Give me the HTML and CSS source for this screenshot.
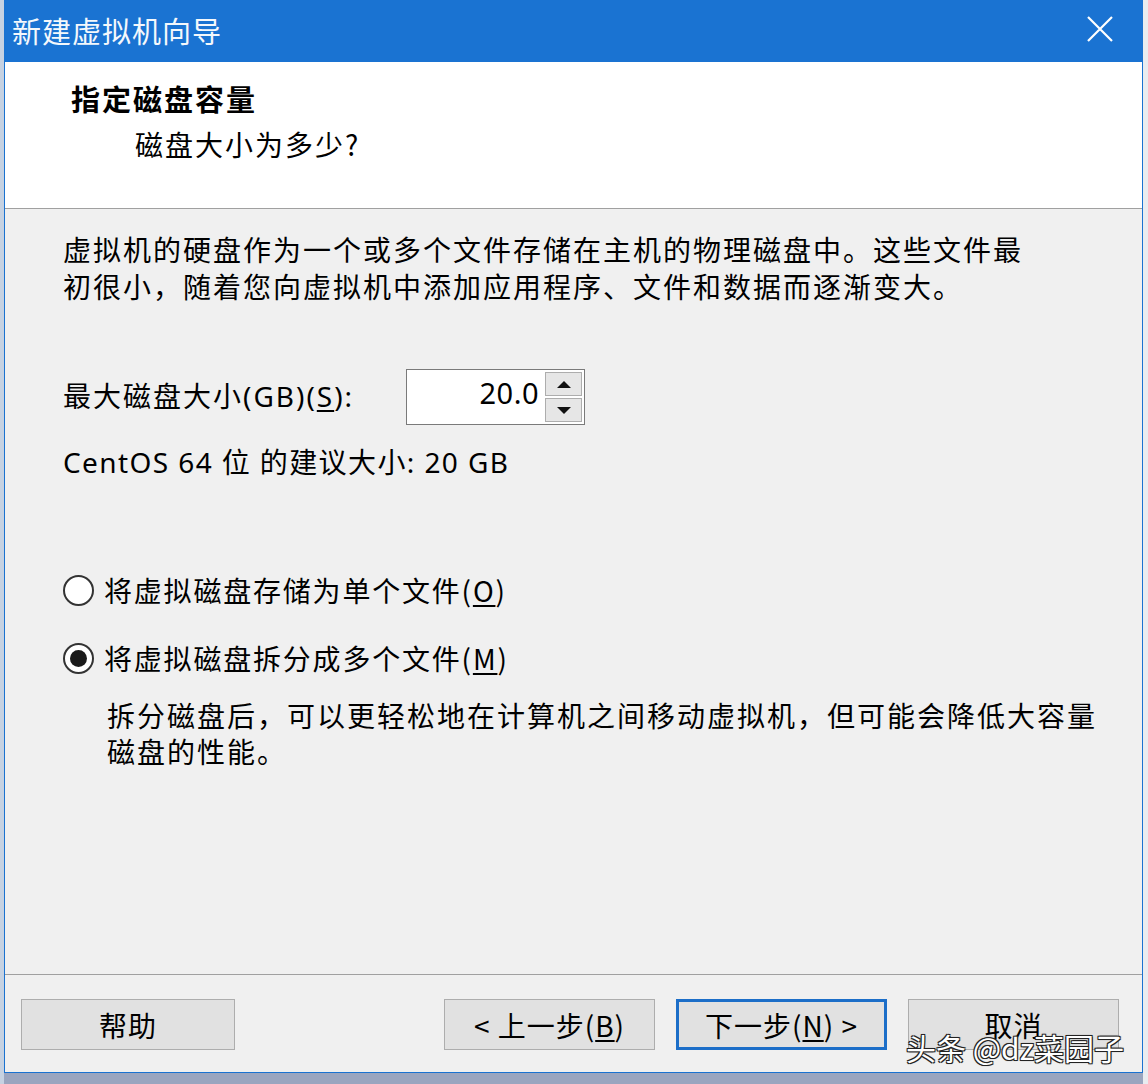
FILE: index.html
```html
<!DOCTYPE html>
<html lang="zh-CN">
<head>
<meta charset="utf-8">
<title>新建虚拟机向导</title>
<link rel="stylesheet" href="styles.css">
</head>
<body>
<div class="screen">
  <div class="dialog">
    <div class="titlebar">
      <span class="title">新建虚拟机向导</span>
      <svg class="close" width="28" height="28" viewBox="0 0 28 28"><path d="M2 2 L26 26 M26 2 L2 26" stroke="#ffffff" stroke-width="2.2" fill="none"/></svg>
    </div>
    <div class="header">
      <div class="h-title">指定磁盘容量</div>
      <div class="h-sub">磁盘大小为多少?</div>
    </div>
    <div class="content">
      <p class="para">虚拟机的硬盘作为一个或多个文件存储在主机的物理磁盘中。这些文件最<br>初很小，随着您向虚拟机中添加应用程序、文件和数据而逐渐变大。</p>
      <div class="size-row">
        <span class="label">最大磁盘大小(GB)(<u>S</u>):</span>
        <div class="spin">
          <div class="spin-input">20.0</div>
          <div class="spin-btns">
            <div class="spin-btn"><span class="tri-up"></span></div>
            <div class="spin-btn"><span class="tri-down"></span></div>
          </div>
        </div>
      </div>
      <div class="recommend">CentOS 64 位 的建议大小: 20 GB</div>
      <div class="radio-row first">
        <span class="radio"></span>
        <span class="radio-text">将虚拟磁盘存储为单个文件(<u>O</u>)</span>
      </div>
      <div class="radio-row second">
        <span class="radio checked"><span class="dot"></span></span>
        <span class="radio-text">将虚拟磁盘拆分成多个文件(<u>M</u>)</span>
      </div>
      <div class="desc">
        <div class="desc-line">拆分磁盘后，可以更轻松地在计算机之间移动虚拟机，但可能会降低大容量</div>
        <div class="desc-line">磁盘的性能。</div>
      </div>
    </div>
    <div class="footer">
      <button class="btn help">帮助</button>
      <div class="spacer"></div>
      <button class="btn back">&lt; 上一步(<u>B</u>)</button>
      <button class="btn next">下一步(<u>N</u>) &gt;</button>
      <button class="btn cancel">取消</button>
    </div>
    <div class="watermark">头条 @dz菜园子</div>
  </div>
</div>
</body>
</html>
```

FILE: styles.css
```css
* { box-sizing: border-box; }
html, body {
  margin: 0;
  padding: 0;
  width: 1148px;
  height: 1084px;
  overflow: hidden;
}
body {
  background: #9aa5bf;
  font-family: "Noto Sans", "Noto Sans CJK SC", sans-serif;
  color: #000;
}
.screen {
  width: 1148px;
  height: 1084px;
  background: linear-gradient(to right, #c6d2e2 0, #c6d2e2 4px, transparent 4px, transparent 1143px, #e9ecf0 1143px);
}
.dialog {
  position: relative;
  margin-left: 4px;
  width: 1139px;
  height: 1073px;
  border: 1px solid #1a72d0;
  border-top: none;
  background: #f0f0f0;
  display: flex;
  flex-direction: column;
}
.titlebar {
  height: 62px;
  background: #1a73d2;
  display: flex;
  align-items: center;
  padding-left: 7px;
  padding-right: 28px;
}
.title {
  color: #f4f8fc;
  font-size: 29px;
  letter-spacing: 1px;
  line-height: 36px;
  margin-top: -2px;
  font-family: "Noto Sans CJK SC", sans-serif;
}
.close {
  margin-left: auto;
  margin-top: -4px;
}
.header {
  height: 147px;
  background: #ffffff;
  border-bottom: 1px solid #a0a0a0;
}
.h-title {
  font-family: "Noto Sans CJK SC", sans-serif;
  font-weight: 700;
  font-size: 29px;
  letter-spacing: 2px;
  line-height: 40px;
  margin-left: 66px;
  margin-top: 16px;
}
.h-sub {
  font-family: "Noto Sans CJK SC", sans-serif;
  font-size: 28px;
  letter-spacing: 2px;
  line-height: 40px;
  margin-left: 130px;
  margin-top: 6px;
}
.content {
  flex: 1;
  padding-left: 58px;
  padding-top: 22px;
  border-bottom: 1px solid #a0a0a0;
  font-size: 28px;
  letter-spacing: 2px;
  line-height: 37px;
}
.para {
  margin: 0;
  font-family: "Noto Sans CJK SC", sans-serif;
}
.size-row {
  display: flex;
  align-items: center;
  margin-top: 64px;
  height: 56px;
}
.label {
  width: 343px;
  font-family: "Noto Sans", "Noto Sans CJK SC", sans-serif;
  letter-spacing: 2px;
  margin-top: -2px;
  white-space: nowrap;
}
u { text-underline-offset: 3px; text-decoration-thickness: 2px; }
.spin {
  display: flex;
  height: 56px;
  width: 179px;
  border: 1px solid #7a7a7a;
  background: #fff;
}
.spin-input {
  flex: 1;
  text-align: right;
  padding-right: 6px;
  line-height: 46px;
  font-size: 29px;
  letter-spacing: 0.5px;
  font-family: "Noto Sans", sans-serif;
}
.spin-btns {
  width: 39px;
  display: flex;
  flex-direction: column;
  gap: 2px;
  padding: 2px 2px 2px 0;
}
.spin-btn {
  flex: 1;
  background: #e6e6e6;
  border: 1px solid #adadad;
  display: flex;
  align-items: center;
  justify-content: center;
}
.tri-up, .tri-down {
  width: 0;
  height: 0;
  border-left: 7px solid transparent;
  border-right: 7px solid transparent;
}
.tri-up { border-bottom: 7px solid #111; }
.tri-down { border-top: 7px solid #111; }
.recommend {
  margin-top: 19px;
  font-family: "Noto Sans", "Noto Sans CJK SC", sans-serif;
  letter-spacing: 1.4px;
}
.radio-row {
  display: flex;
  align-items: center;
  height: 37px;
}
.radio-row.first { margin-top: 91px; }
.radio-row.second { margin-top: 31px; }
.radio {
  width: 31px;
  height: 31px;
  border-radius: 50%;
  border: 2px solid #333;
  background: #fff;
  margin-left: 0;
  margin-right: 10px;
  display: flex;
  align-items: center;
  justify-content: center;
}
.radio .dot {
  width: 17px;
  height: 17px;
  border-radius: 50%;
  background: #1a1a1a;
}
.radio-text {
  font-family: "Noto Sans CJK SC", sans-serif;
  letter-spacing: 1.8px;
}
.desc {
  margin: 20px 0 0 44px;
  font-family: "Noto Sans CJK SC", sans-serif;
}
.desc-line {
  height: 36px;
  line-height: 36px;
  white-space: nowrap;
}
.footer {
  height: 97px;
  display: flex;
  align-items: flex-start;
  padding: 24px 23px 0 16px;
  gap: 21px;
}
.spacer { flex: 1; }
.btn {
  height: 51px;
  width: 211px;
  background: #e1e1e1;
  border: 1px solid #adadad;
  font-family: "Noto Sans CJK SC", sans-serif;
  font-size: 28px;
  letter-spacing: 1px;
  color: #000;
  padding: 0;
  display: flex;
  align-items: center;
  justify-content: center;
}
.btn.help { width: 214px; }
.btn.next { border: 3px solid #1c6ec8; }
.watermark {
  position: absolute;
  left: 901px;
  top: 1025px;
  font-family: "Noto Sans CJK SC", sans-serif;
  font-size: 30px;
  color: #ffffff;
  letter-spacing: 0;
  text-shadow: -1px -1px 0 #222, 1px -1px 0 #222, -1px 1px 0 #222, 1px 1px 0 #222, 0 0 2px #000;
  white-space: nowrap;
}
```
